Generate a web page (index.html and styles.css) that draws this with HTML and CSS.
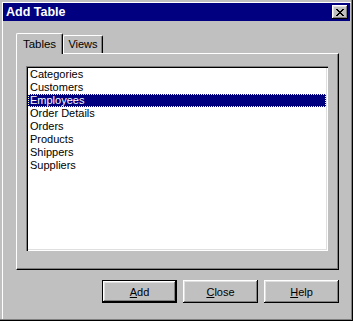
FILE: index.html
```html
<!DOCTYPE html>
<html lang="en">
<head>
  <meta charset="UTF-8">
  <title>Add Table</title>
  <link rel="stylesheet" href="styles.css">
</head>
<body>
  <div class="window">
    <div class="title-bar">
      <span class="title-text">Add Table</span>
      <button class="close-btn" aria-label="Close">
        <svg width="8" height="7" viewBox="0 0 8 7" shape-rendering="crispEdges">
          <path d="M0 0h2v1h-2zM6 0h2v1h-2zM1 1h2v1h-2zM5 1h2v1h-2zM2 2h4v1h-4zM3 3h2v1h-2zM2 4h4v1h-4zM1 5h2v1h-2zM5 5h2v1h-2zM0 6h2v1h-2zM6 6h2v1h-2z" fill="#000"/>
        </svg>
      </button>
    </div>
    <div class="dialog-body">
      <div class="tabs">
        <div class="tab active">Tables</div>
        <div class="tab">Views</div>
      </div>
      <div class="tab-panel">
        <ul class="listbox">
          <li>Categories</li>
          <li>Customers</li>
          <li class="selected">Employees</li>
          <li>Order Details</li>
          <li>Orders</li>
          <li>Products</li>
          <li>Shippers</li>
          <li>Suppliers</li>
        </ul>
      </div>
      <div class="buttons">
        <button class="btn default"><u>A</u>dd</button>
        <button class="btn"><u>C</u>lose</button>
        <button class="btn"><u>H</u>elp</button>
      </div>
    </div>
  </div>
</body>
</html>
```

FILE: styles.css
```css
body {
  margin: 0;
  background: #c0c0c0;
  font-family: 'Liberation Sans', Arial, sans-serif;
  font-size: 11px;
  color: #000;
}
.window {
  width: 353px;
  height: 321px;
  box-sizing: border-box;
  padding: 3px;
  background: #c0c0c0;
  box-shadow: inset -1px -1px #000, inset -2px -2px #808080, inset 2px 2px #c0c0c0, inset 3px 3px #fff;
  display: flex;
  flex-direction: column;
}
.title-bar {
  height: 18px;
  background: #000080;
  display: flex;
  align-items: center;
  justify-content: space-between;
  padding: 0 2px 0 3px;
}
.title-text {
  color: #fff;
  font-weight: bold;
  font-size: 12.5px;
}
.close-btn {
  width: 16px;
  height: 14px;
  padding: 0;
  border: none;
  background: #c0c0c0;
  box-shadow: inset -1px -1px #000, inset 1px 1px #fff, inset -2px -2px #808080, inset 2px 2px #dfdfdf;
  display: flex;
  align-items: center;
  justify-content: center;
}
.close-btn svg {
  display: block;
  margin-left: -1px;
}
.dialog-body {
  padding: 12px 11px 0 13px;
  display: flex;
  flex-direction: column;
}
.tabs {
  display: flex;
  align-items: flex-end;
  height: 20px;
}
.tab {
  box-sizing: border-box;
  width: 40px;
  height: 18px;
  padding-top: 1px;
  text-align: center;
  border-left: 1px solid #fff;
  border-top: 1px solid #fff;
  border-right: 1px solid #000;
  border-top-left-radius: 2px;
  border-top-right-radius: 2px;
  box-shadow: inset -1px 0 #808080;
  line-height: 15px;
}
.tab.active {
  width: 47px;
  height: 21px;
  margin-bottom: -1px;
  padding-top: 3px;
  background: #c0c0c0;
  position: relative;
  z-index: 1;
  font-size: 11.5px;
}
.tab-panel {
  height: 217px;
  box-sizing: border-box;
  border-top: 1px solid #fff;
  border-left: 1px solid #fff;
  border-right: 1px solid #000;
  border-bottom: 1px solid #000;
  box-shadow: inset -1px -1px #808080;
  padding: 12px 10px 0 9px;
}
.listbox {
  list-style: none;
  margin: 0;
  height: 185px;
  box-sizing: border-box;
  padding: 2px;
  background: #fff;
  box-shadow: inset 1px 1px #808080, inset 2px 2px #000, inset -1px -1px #fff, inset -2px -2px #dfdfdf;
}
.listbox li {
  height: 13px;
  line-height: 13px;
  padding-left: 2px;
  white-space: nowrap;
}
.listbox li.selected {
  background: #000080;
  color: #fff;
  outline: 1px dotted #ffffc0;
  outline-offset: -1px;
}
.buttons {
  display: flex;
  justify-content: flex-end;
  gap: 6px;
  margin-top: 10px;
}
.btn {
  width: 75px;
  height: 23px;
  padding: 0;
  border: none;
  background: #c0c0c0;
  font-family: 'Liberation Sans', Arial, sans-serif;
  font-size: 11px;
  color: #000;
  box-shadow: inset -1px -1px #000, inset 1px 1px #fff, inset -2px -2px #808080, inset 2px 2px #dfdfdf;
}
.btn.default {
  box-shadow: inset 0 0 0 1px #000, inset -2px -2px #000, inset 2px 2px #fff, inset -3px -3px #808080, inset 3px 3px #dfdfdf;
}
```
